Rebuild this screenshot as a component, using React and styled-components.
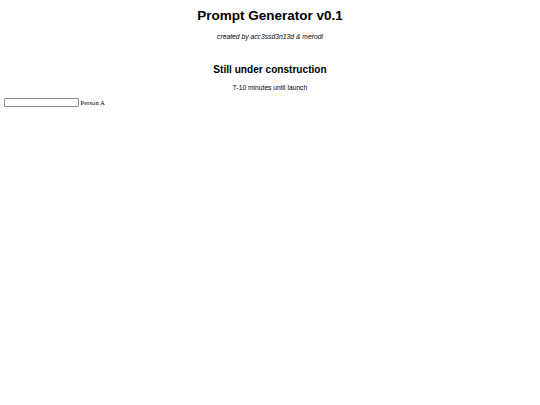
import React from 'react'
import styled, { createGlobalStyle } from 'styled-components'

const GlobalStyle = createGlobalStyle`
  html, body {
    margin: 0;
    padding: 0;
    background: #ffffff;
  }
  body {
    padding: 3.6px;
    font-family: "Liberation Serif", "Times New Roman", serif;
    color: #000000;
  }
`

const Header = styled.header`
  text-align: center;
  font-family: "Liberation Sans", Arial, sans-serif;
`

const Title = styled.h1`
  font-size: 13.5px;
  font-weight: bold;
  margin: 4.6px 0 0;
  line-height: 1.15;
`

const Credit = styled.p`
  font-size: 6.75px;
  font-style: italic;
  margin: 9.4px 0 0;
  line-height: 1.15;
`

const Notice = styled.h2`
  font-size: 10.1px;
  font-weight: bold;
  margin: 23.3px 0 0;
  line-height: 1.15;
`

const Countdown = styled.p`
  font-size: 6.7px;
  margin: 8.3px 0 0;
  line-height: 1.15;
`

const Row = styled.div`
  display: flex;
  align-items: center;
  gap: 2px;
  margin-top: 6.1px;
`

const NameInput = styled.input`
  box-sizing: border-box;
  width: 75px;
  height: 9.5px;
  padding: 0 2px;
  border: 1px solid #8f8f8f;
  border-radius: 1px;
  font-size: 6px;
  background: #ffffff;
`

const Label = styled.label`
  font-size: 6.7px;
  font-family: "Liberation Serif", "Times New Roman", serif;
`

export default function App() {
  return (
    <>
      <GlobalStyle />
      <Header>
        <Title>Prompt Generator v0.1</Title>
        <Credit>created by acc3ssd3n13d &amp; merodi</Credit>
        <Notice>Still under construction</Notice>
        <Countdown>T-10 minutes until launch</Countdown>
      </Header>
      <Row>
        <NameInput type="text" id="personA" />
        <Label htmlFor="personA">Person A</Label>
      </Row>
    </>
  )
}
